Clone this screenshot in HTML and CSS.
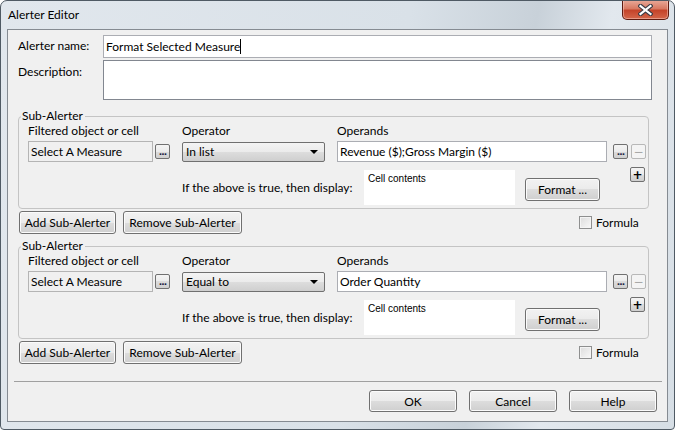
FILE: index.html
```html
<!DOCTYPE html>
<html>
<head>
    <meta charset="UTF-8">
    <title>Alerter Editor</title>
    <link rel="stylesheet" href="styles.css">
</head>
<body>
<div class="window">
    <div class="titlebar">
        <span class="title">Alerter Editor</span>
        <div class="close-btn">
            <svg width="15" height="12" viewBox="0 0 15 12">
                <path d="M2.5 2 L12.5 10 M12.5 2 L2.5 10" stroke="#3d3d46" stroke-width="4.4" stroke-linecap="square"/>
                <path d="M2.5 2 L12.5 10 M12.5 2 L2.5 10" stroke="#ffffff" stroke-width="2.2" stroke-linecap="square"/>
            </svg>
        </div>
    </div>

    <div class="client">
        <div class="field-row">
            <label class="field-label">Alerter name:</label>
            <div class="text-input name-input">Format Selected Measure<span class="caret"></span></div>
        </div>
        <div class="field-row desc-row">
            <label class="field-label desc-label">Description:</label>
            <div class="text-area"></div>
        </div>

        <!-- first sub-alerter -->
        <div class="sub-alerter">
            <span class="legend">Sub-Alerter</span>
            <div class="col-labels">
                <span class="lbl-filter">Filtered object or cell</span>
                <span class="lbl-op">Operator</span>
                <span>Operands</span>
            </div>
            <div class="controls-row">
                <div class="measure-box">Select A Measure</div>
                <div class="mini-btn dots-btn first-dots">...</div>
                <div class="combo">In list<span class="arrow"></span></div>
                <div class="operands">Revenue ($);Gross Margin ($)</div>
                <div class="mini-btn dots-btn">...</div>
                <div class="mini-btn sign-btn disabled">&minus;</div>
            </div>
            <div class="display-row">
                <span class="display-text">If the above is true, then display:</span>
                <div class="cell-box">Cell contents</div>
                <div class="btn format-btn">Format ...</div>
                <div class="mini-btn sign-btn plus-btn">+</div>
            </div>
        </div>
        <div class="sub-actions">
            <div class="btn add-btn">Add Sub-Alerter</div>
            <div class="btn remove-btn">Remove Sub-Alerter</div>
            <div class="formula">
                <span class="check"></span>
                <span>Formula</span>
            </div>
        </div>

        <!-- second sub-alerter -->
        <div class="sub-alerter second">
            <span class="legend">Sub-Alerter</span>
            <div class="col-labels">
                <span class="lbl-filter">Filtered object or cell</span>
                <span class="lbl-op">Operator</span>
                <span>Operands</span>
            </div>
            <div class="controls-row">
                <div class="measure-box">Select A Measure</div>
                <div class="mini-btn dots-btn first-dots">...</div>
                <div class="combo">Equal to<span class="arrow"></span></div>
                <div class="operands">Order Quantity</div>
                <div class="mini-btn dots-btn">...</div>
                <div class="mini-btn sign-btn disabled">&minus;</div>
            </div>
            <div class="display-row">
                <span class="display-text">If the above is true, then display:</span>
                <div class="cell-box">Cell contents</div>
                <div class="btn format-btn">Format ...</div>
                <div class="mini-btn sign-btn plus-btn">+</div>
            </div>
        </div>
        <div class="sub-actions">
            <div class="btn add-btn">Add Sub-Alerter</div>
            <div class="btn remove-btn">Remove Sub-Alerter</div>
            <div class="formula">
                <span class="check"></span>
                <span>Formula</span>
            </div>
        </div>

        <div class="separator"></div>
        <div class="footer">
            <div class="btn footer-btn">OK</div>
            <div class="btn footer-btn">Cancel</div>
            <div class="btn footer-btn">Help</div>
        </div>
    </div>
</div>
</body>
</html>
```

FILE: styles.css
```css
body {
    margin: 0;
    font-family: Lato, "Noto Sans", sans-serif;
    font-size: 12px;
    color: #000;
}

.window {
    width: 675px;
    height: 430px;
    box-sizing: border-box;
    border: 1px solid #4f5a64;
    border-radius: 7px 7px 4px 4px;
    background: linear-gradient(100deg, #e1e7ed 0%, #d9e1e8 55%, #c8d1d9 72%, #e2e8ee 82%, #d6dee5 100%);
    display: flex;
    flex-direction: column;
    overflow: hidden;
}

/* title bar */
.titlebar {
    height: 28px;
    display: flex;
    align-items: flex-start;
    flex-shrink: 0;
}
.title {
    margin: 6px 0 0 7px;
    line-height: 16px;
}
.close-btn {
    margin: -1px 5px 0 auto;
    width: 47px;
    height: 20px;
    box-sizing: border-box;
    border: 1px solid #5e1b10;
    border-top: none;
    border-radius: 0 0 5px 5px;
    background: linear-gradient(#e9ab9b 0%, #d87a63 45%, #c4442a 55%, #d4664a 100%);
    box-shadow: inset 0 0 0 1px rgba(255, 220, 210, 0.45);
    display: flex;
    align-items: center;
    justify-content: center;
}

/* dialog body */
.client {
    margin: 0 6px 7px 6px;
    flex: 1;
    border: 1px solid #858b92;
    background: #f0f0f0;
    padding: 5px 15px 0 10px;
    display: flex;
    flex-direction: column;
}

.field-row {
    display: flex;
}
.desc-row {
    margin-top: 2px;
}
.field-label {
    width: 85px;
    flex-shrink: 0;
    line-height: 16px;
    padding-top: 3px;
}
.desc-label {
    padding-top: 4px;
}
.text-input {
    flex: 1;
    height: 23px;
    box-sizing: border-box;
    border: 1px solid #abadb3;
    background: #fff;
    padding-left: 2px;
    line-height: 21px;
    display: flex;
    align-items: center;
}
.caret {
    width: 1px;
    height: 15px;
    background: #000;
}
.text-area {
    flex: 1;
    height: 40px;
    box-sizing: border-box;
    border: 1px solid #828790;
    background: #fff;
}

/* sub-alerter groups */
.sub-alerter {
    position: relative;
    margin: 16px 3px 0 0;
    height: 93px;
    box-sizing: border-box;
    border: 1px solid #c4c4c4;
    border-radius: 4px;
    padding-top: 6px;
}
.sub-alerter.second {
    margin-top: 12px;
}
.legend {
    position: absolute;
    top: -8px;
    left: 2px;
    padding: 0 2px 0 1px;
    background: #f0f0f0;
    line-height: 14px;
}
.col-labels {
    display: flex;
    line-height: 16px;
    padding-left: 9px;
}
.lbl-filter {
    width: 154px;
}
.lbl-op {
    width: 155px;
}

.controls-row {
    margin-top: 2px;
    height: 21px;
    display: flex;
    align-items: center;
    padding-left: 9px;
}
.measure-box {
    width: 125px;
    height: 21px;
    box-sizing: border-box;
    border: 1px solid #b4b4b4;
    background: #f0f0f0;
    padding-left: 2px;
    line-height: 19px;
}
.mini-btn {
    width: 15px;
    height: 15px;
    box-sizing: border-box;
    border: 1px solid #707070;
    border-radius: 2px;
    background: linear-gradient(#f4f4f4 0%, #ebebeb 50%, #dcdcdc 50%, #cfcfcf 100%);
    display: flex;
    align-items: center;
    justify-content: center;
    flex-shrink: 0;
}
.dots-btn {
    margin-left: 6px;
    font-family: "DejaVu Sans", sans-serif;
    font-size: 9px;
    font-weight: bold;
    line-height: 9px;
    align-items: flex-end;
    padding-bottom: 1px;
    letter-spacing: -1px;
    color: #202040;
}
.first-dots {
    margin-left: 2px;
}
.sign-btn {
    margin-left: 3px;
    font-family: "DejaVu Sans", sans-serif;
    font-size: 12px;
    line-height: 12px;
    font-weight: bold;
}
.disabled {
    border-color: #b8b8b8;
    background: #f4f4f4;
    color: #a8a8a8;
    font-weight: normal;
}
.combo {
    margin-left: 12px;
    width: 143px;
    height: 20px;
    box-sizing: border-box;
    border: 1px solid #707070;
    border-radius: 2px;
    background: linear-gradient(#f4f4f4 0%, #ebebeb 50%, #dddddd 50%, #cfcfcf 100%);
    padding-left: 3px;
    line-height: 18px;
    display: flex;
    align-items: center;
}
.arrow {
    margin: 1px 6px 0 auto;
    width: 0;
    height: 0;
    border-left: 4px solid transparent;
    border-right: 4px solid transparent;
    border-top: 4px solid #000;
}
.operands {
    margin-left: 12px;
    width: 270px;
    height: 21px;
    box-sizing: border-box;
    border: 1px solid #abadb3;
    background: #fff;
    padding-left: 2px;
    line-height: 19px;
}

.display-row {
    display: flex;
    align-items: flex-start;
    height: 43px;
}
.display-text {
    margin: 18px 0 0 163px;
    width: 182px;
    line-height: 16px;
    white-space: nowrap;
}
.cell-box {
    margin-top: 8px;
    width: 151px;
    height: 35px;
    box-sizing: border-box;
    background: #fff;
    padding: 3px 0 0 4px;
    font-family: "Liberation Sans", sans-serif;
    font-size: 10px;
    line-height: 12px;
}
.btn {
    box-sizing: border-box;
    border: 1px solid #707070;
    border-radius: 3px;
    background: linear-gradient(#f2f2f2 0%, #ebebeb 50%, #dddddd 50%, #cfcfcf 100%);
    box-shadow: inset 0 0 0 1px #fbfbfb;
    display: flex;
    align-items: center;
    justify-content: center;
    height: 23px;
}
.format-btn {
    margin: 16px 0 0 10px;
    width: 75px;
}
.plus-btn {
    margin: 5px 0 0 30px;
}

.sub-actions {
    margin: 2px 3px 0 1px;
    display: flex;
    align-items: center;
}
.add-btn {
    width: 97px;
}
.remove-btn {
    margin-left: 7px;
    width: 119px;
}
.formula {
    margin-left: auto;
    width: 70px;
    display: flex;
    align-items: center;
}
.check {
    width: 13px;
    height: 13px;
    box-sizing: border-box;
    border: 1px solid #8e8f8f;
    background: linear-gradient(135deg, #dcdcdc, #f8f8f8);
    box-shadow: inset 0 0 0 1px #f4f4f4;
    margin-right: 4px;
}

.separator {
    margin: 17px -10px 0 -4px;
    height: 1px;
    background: #a0a0a0;
}
.footer {
    margin: 8px -5px 0 0;
    display: flex;
    justify-content: flex-end;
    gap: 12px;
}
.footer-btn {
    width: 88px;
    height: 22px;
}
```
